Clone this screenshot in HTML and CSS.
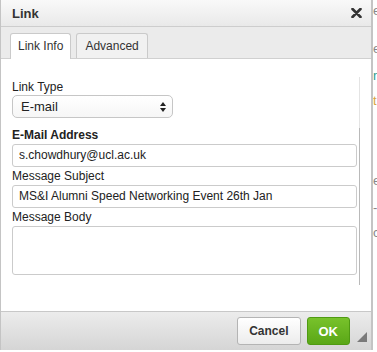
FILE: index.html
```html
<!DOCTYPE html>
<html lang="en">
<head>
    <meta charset="UTF-8">
    <meta name="viewport" content="width=device-width, initial-scale=1.0">
    <title>Link</title>
    <link rel="stylesheet" href="styles.css">
</head>
<body>
    <div class="dialog">
        <div class="titlebar">
            <span class="title">Link</span>
            <svg class="close" width="11" height="10" viewBox="0 0 11 10">
                <path d="M1.5 1 L9.5 9 M9.5 1 L1.5 9" stroke="#333" stroke-width="2.6" stroke-linecap="round"/>
            </svg>
        </div>
        <div class="tabs">
            <div class="tab active">Link Info</div>
            <div class="tab">Advanced</div>
        </div>
        <div class="content">
            <div class="group type-group">
                <label class="field-label">Link Type</label>
                <div class="select">
                    <span>E-mail</span>
                    <svg width="6" height="10" viewBox="0 0 6 10">
                        <path d="M3 0 L6 4 L0 4 Z M3 10 L6 6 L0 6 Z" fill="#222"/>
                    </svg>
                </div>
            </div>
            <div class="group email-group">
                <label class="field-label bold">E-Mail Address</label>
                <div class="input">s.chowdhury@ucl.ac.uk</div>
                <label class="field-label">Message Subject</label>
                <div class="input">MS&amp;I Alumni Speed Networking Event 26th Jan</div>
                <label class="field-label">Message Body</label>
                <div class="input textarea"></div>
            </div>
        </div>
        <div class="footer">
            <button class="btn cancel">Cancel</button>
            <button class="btn ok">OK</button>
            <div class="resize"></div>
        </div>
    </div>
    <div class="edge">
        <div class="edge-line" style="margin-top: 3px">e</div>
        <div class="edge-line" style="margin-top: 23px">e</div>
        <div class="edge-line teal" style="margin-top: 12px">n</div>
        <div class="edge-line orange" style="margin-top: 10px">t</div>
        <div class="edge-line" style="margin-top: 65px">e</div>
        <div class="edge-line" style="margin-top: 12px">-</div>
        <div class="edge-line" style="margin-top: 10px">c</div>
    </div>
</body>
</html>
```

FILE: styles.css
```css
body {
    margin: 0;
    display: flex;
    background: #fff;
    font-family: "Liberation Sans", Arial, sans-serif;
    font-size: 12px;
    color: #222;
}

.dialog {
    width: 370px;
    height: 350px;
    border-left: 1px solid #c4c4c4;
    border-right: 2px solid #c4c4c4;
    display: flex;
    flex-direction: column;
    flex-shrink: 0;
}

.titlebar {
    height: 26px;
    border-bottom: 1px solid #cdcdcd;
    background: linear-gradient(#f9f9f9, #e9e9e9);
    display: flex;
    align-items: center;
    justify-content: space-between;
    padding: 0 9px 0 11px;
}

.title {
    font-size: 13px;
    font-weight: bold;
    color: #333;
}

.close {
    display: block;
}

.tabs {
    height: 25px;
    padding: 6px 0 0 9px;
    background: #ebebeb;
    border-bottom: 1px solid #d0d0d0;
    display: flex;
    align-items: flex-end;
    gap: 5px;
}

.tab {
    height: 24px;
    line-height: 24px;
    padding: 0 8px;
    border: 1px solid #cacaca;
    border-bottom: none;
    border-radius: 3px 3px 0 0;
    background: #f1f1f1;
    color: #333;
}

.tab.active {
    height: 25px;
    margin-bottom: -1px;
    background: #fff;
    padding: 0 7px;
}

.content {
    flex: 1;
    background: #fff;
    padding: 18px 11px 25px 11px;
}

.group {
    width: 347px;
}

.type-group {
    border-right: 1px solid #e4e4e4;
    padding: 3px 0 10px 0;
}

.email-group {
    border-right: 1px solid #b9b9b9;
    padding-bottom: 10px;
}

.field-label {
    display: block;
    line-height: 14px;
    margin-bottom: 2px;
}

.type-group .field-label {
    margin-bottom: 1px;
}

.bold {
    font-weight: bold;
}

.select {
    box-sizing: border-box;
    width: 161px;
    height: 23px;
    border: 1px solid #c6c6c6;
    border-radius: 5px;
    background: linear-gradient(#fff, #f6f6f6);
    display: flex;
    align-items: center;
    justify-content: space-between;
    padding: 0 6px 0 8px;
    font-size: 13px;
}

.select svg {
    display: block;
}

.input {
    box-sizing: border-box;
    width: 345px;
    height: 23px;
    line-height: 21px;
    border: 1px solid #cbcbcb;
    border-radius: 3px;
    padding: 0 6px;
    margin-bottom: 2px;
    font-size: 12px;
    white-space: nowrap;
    overflow: hidden;
}

.textarea {
    height: 49px;
    margin-bottom: 0;
}

.footer {
    position: relative;
    height: 39px;
    border-top: 1px solid #c8c8c8;
    background: linear-gradient(#ececec, #d5d5d5);
    display: flex;
    justify-content: flex-end;
    align-items: flex-start;
    padding: 5px 21px 0 0;
    box-sizing: border-box;
    gap: 6px;
}

.btn {
    height: 28px;
    padding: 0 11px;
    border-radius: 3px;
    font-family: "Liberation Sans", Arial, sans-serif;
    font-weight: bold;
    font-size: 12px;
    cursor: pointer;
}

.cancel {
    border: 1px solid #b4b4b4;
    background: linear-gradient(#ffffff, #ececec);
    color: #333;
}

.ok {
    border: 1px solid #4f9a12;
    background: linear-gradient(#78c22b, #5aa717);
    color: #fff;
    font-size: 13px;
}

.resize {
    position: absolute;
    right: 4px;
    bottom: 8px;
    width: 0;
    height: 0;
    border-left: 10px solid transparent;
    border-bottom: 10px solid #7a7a7a;
}

.edge {
    width: 4px;
    overflow: hidden;
    font-size: 13px;
    color: #888;
}

.edge-line {
    line-height: 15px;
}

.teal {
    color: #2a9b8e;
}

.orange {
    color: #d9a441;
}
```
